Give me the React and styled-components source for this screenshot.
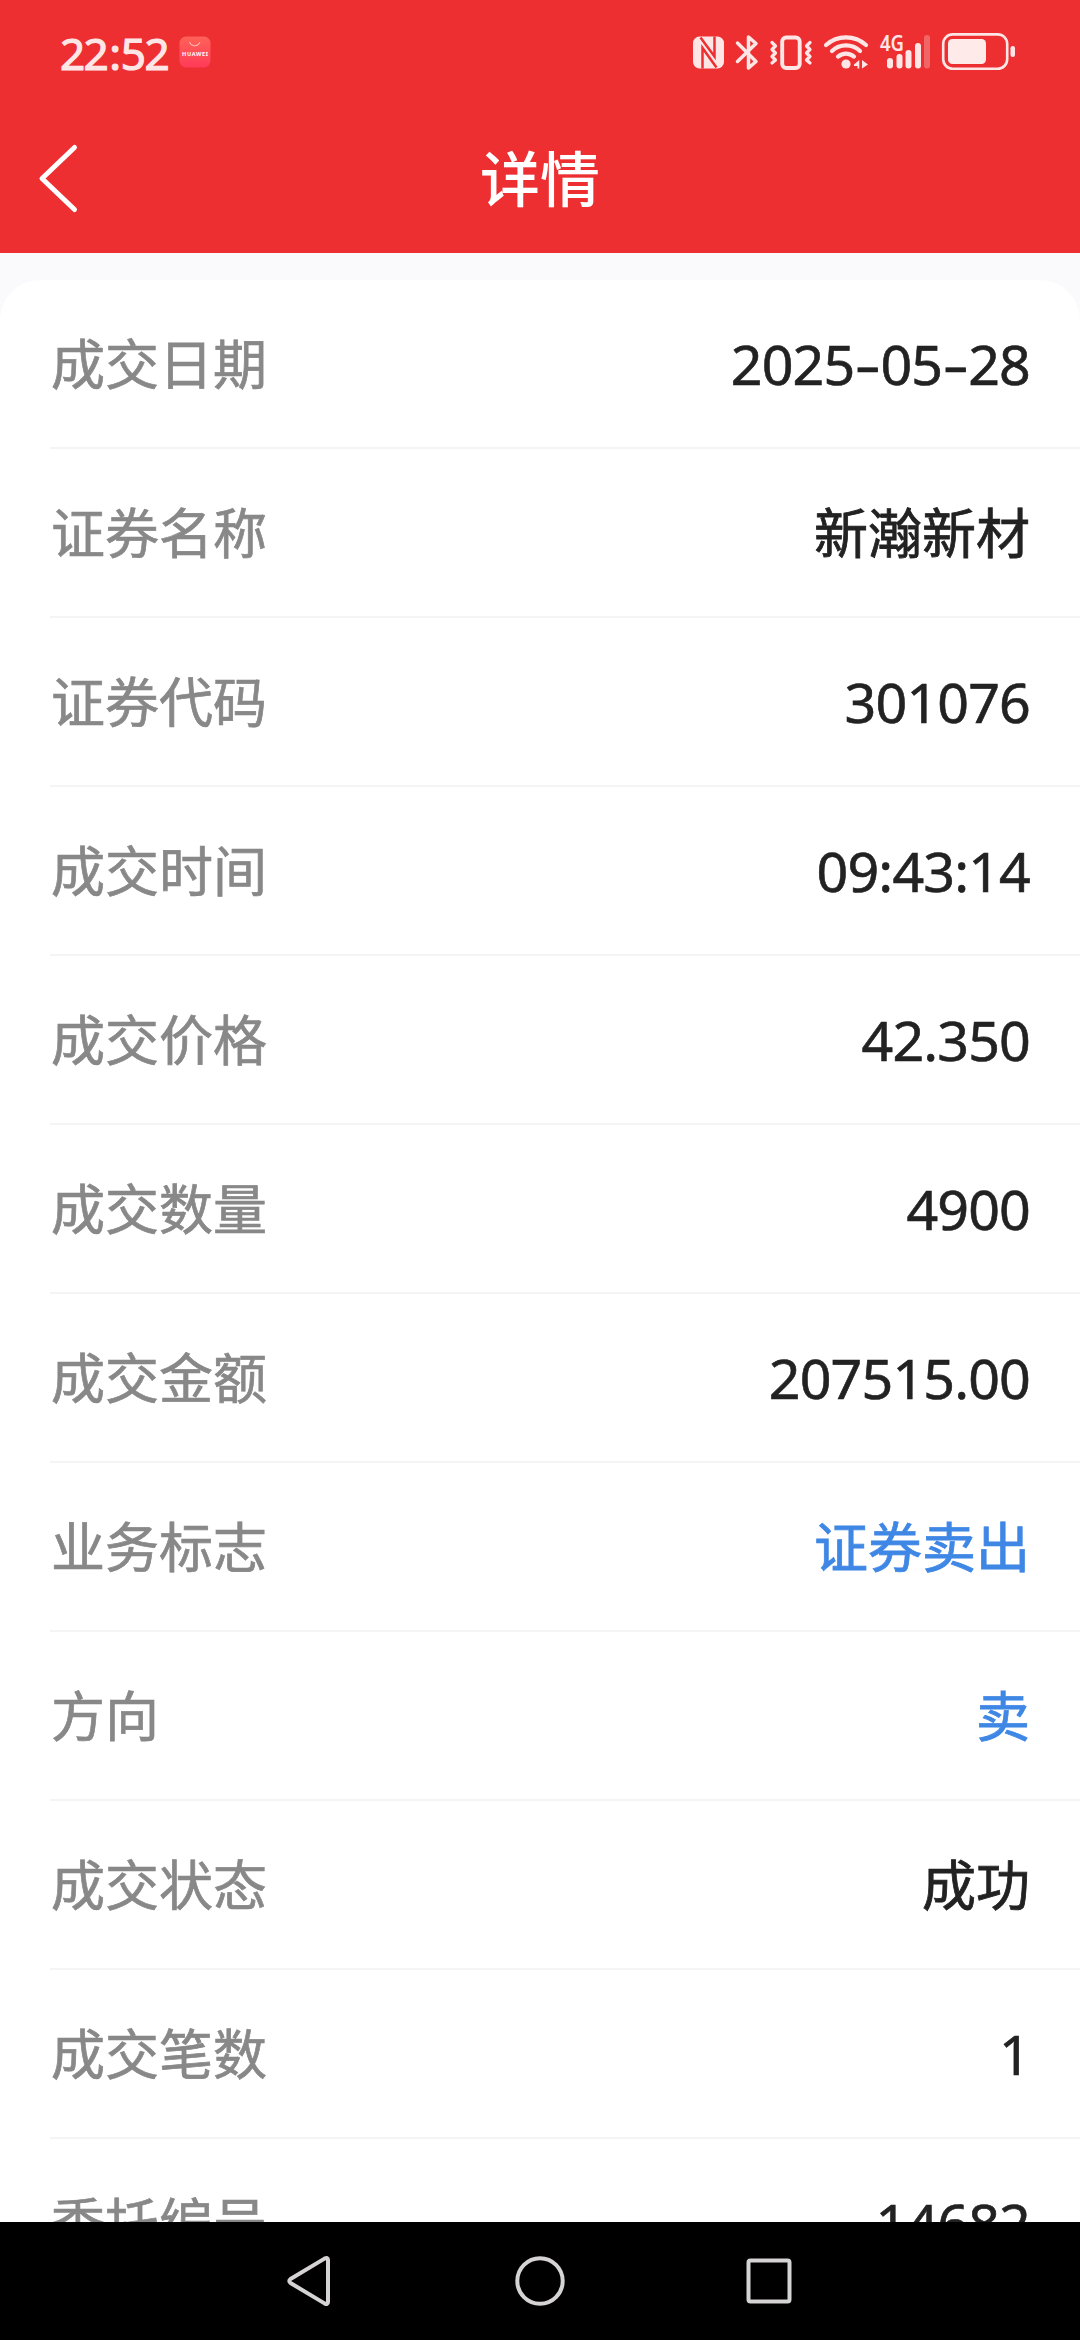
import React from "react";
import styled, { createGlobalStyle } from "styled-components";

const GlobalStyle = createGlobalStyle`
  * { box-sizing: border-box; }
  html, body { margin: 0; padding: 0; background: #000; }
  body { font-family: "Noto Sans", "Noto Sans CJK SC", sans-serif; }
`;

const Screen = styled.div`
  width: 1080px;
  height: 2340px;
  overflow: hidden;
  display: flex;
  flex-direction: column;
  background: #fafafc;
`;

const Header = styled.header`
  flex: none;
  height: 253px;
  background: #ed2f32;
  display: flex;
  flex-direction: column;
`;

const StatusBar = styled.div`
  height: 104px;
  padding: 0 60px;
  display: flex;
  align-items: center;
`;

const Clock = styled.span`
  width: 119px;
  font-size: 44px;
  line-height: 54px;
  font-weight: 400;
  letter-spacing: -1.6px;
  padding-top: 1px;
  color: #ffe6e6;
  -webkit-text-stroke: 1.2px #ffe6e6;
`;

const Colon = styled.span`
  padding: 0 1.5px 0 2px;
`;

const StatusIcons = styled.div`
  margin-left: auto;
  display: flex;
`;

const Icon = styled.svg`
  display: block;
  flex: none;
  overflow: visible;
`;

const TitleBar = styled.div`
  height: 149px;
  padding: 0 36px;
  display: grid;
  grid-template-columns: 120px 1fr 120px;
  align-items: center;
`;

const BackButton = styled.button`
  border: 0;
  padding: 0;
  background: none;
  justify-self: start;
  display: flex;
`;

const Title = styled.h1`
  margin: 0;
  padding-bottom: 5px;
  text-align: center;
  font-family: "Noto Sans CJK SC", sans-serif;
  font-size: 60px;
  line-height: 72px;
  font-weight: 500;
  color: #fff;
`;

const Content = styled.main`
  flex: 1;
  min-height: 0;
  overflow: hidden;
  padding-top: 27px;
`;

const Card = styled.section`
  background: #fff;
  border-radius: 40px 40px 0 0;
  padding-left: 50px;
`;

const Row = styled.div`
  height: 169px;
  padding: 0 50px 0 1px;
  border-bottom: 2px solid #f4f4f4;
  display: flex;
  align-items: center;
  justify-content: space-between;
  font-family: "Noto Sans CJK SC", sans-serif;
  font-size: 54px;
  line-height: 80px;
  font-weight: 400;
`;

const Label = styled.span`
  padding-bottom: 4px;
  color: #888;
  -webkit-text-stroke: 0.7px #888;
`;

const Value = styled.span`
  padding-bottom: 4px;
  color: ${(p) => (p.$accent ? "#3f87e5" : "#222")};
  -webkit-text-stroke: 0.8px ${(p) => (p.$accent ? "#3f87e5" : "#222")};
`;

const NumberValue = styled.span`
  color: #222;
  font-family: "Noto Sans", sans-serif;
  font-size: 55.5px;
  letter-spacing: -0.85px;
  -webkit-text-stroke: 0.6px #222;
`;

const Dash = styled.span`
  display: inline-block;
  width: 26px;
  text-align: center;
  transform: translateY(-0.5px) scaleX(1.45);
`;

const NavBar = styled.nav`
  flex: none;
  height: 118px;
  background: #000;
  display: flex;
  align-items: center;
  justify-content: center;
  gap: 173px;
`;

const INK = "#ffe6e6";

function AppBadge() {
  return (
    <Icon width="32" height="32" viewBox="0 0 32 32">
      <defs>
        <linearGradient id="badge" x1="0" y1="0" x2="0" y2="1">
          <stop offset="0" stopColor="#ff6258" />
          <stop offset="1" stopColor="#ff3a58" />
        </linearGradient>
      </defs>
      <rect x="0.5" y="0.5" width="31" height="31" rx="6.5" fill="url(#badge)" />
      <path d="M10.5 6 A5.4 5 0 0 0 21 6" fill="none" stroke="#ffc9c4" strokeWidth="1" />
      <text x="3" y="20.3" fontSize="5.6" fontWeight="700" fill="#fff" textLength="26">HUAWEI</text>
    </Icon>
  );
}

function Nfc() {
  return (
    <Icon width="38" height="40" viewBox="691 32 38 40">
      <rect x="693" y="36.5" width="31" height="32" rx="6.5" fill={INK} />
      <g fill="none" stroke="#ed2f32" strokeWidth="2.5">
        <path d="M700.5 37.5 L714.5 56.5 V36.5" />
        <path d="M702.5 68.5 V48 L716.5 67.5" />
      </g>
    </Icon>
  );
}

function Bluetooth() {
  return (
    <Icon width="36" height="40" viewBox="729 32 36 40">
      <path
        d="M737.5 43 L756 61.5 L748.5 68 V37 L756 43.5 L737.5 61.5"
        fill="none" stroke={INK} strokeWidth="3.5" strokeLinecap="round" strokeLinejoin="round"
      />
    </Icon>
  );
}

function Vibrate() {
  return (
    <Icon width="53" height="40" viewBox="765 32 53 40">
      <g fill="none" stroke={INK} strokeLinecap="round" strokeLinejoin="round">
        <rect x="782.2" y="37.5" width="17.5" height="30.5" rx="4" strokeWidth="3.9" />
        <path d="M772 42.5 L775.5 46 L772 49.5 L775.5 53 L772 56.5 L775.5 60 L772 63" strokeWidth="3.2" />
        <path d="M810 42.5 L806.5 46 L810 49.5 L806.5 53 L810 56.5 L806.5 60 L810 63" strokeWidth="3.2" />
      </g>
    </Icon>
  );
}

function Wifi() {
  return (
    <Icon width="58" height="40" viewBox="818 32 58 40">
      <g fill="none" stroke={INK} strokeWidth="4.2" strokeLinecap="round">
        <path d="M826 45 A30 30 0 0 1 866 45" />
        <path d="M832 51 A20.5 20.5 0 0 1 860 51" />
        <path d="M838 56.6 A12 12 0 0 1 854 56.6" />
      </g>
      <circle cx="846" cy="64" r="4.6" fill={INK} />
      <path d="M854 64.5 L859.3 60 V68.5 H857.5 V66 H854 Z M862 60 L868 64.5 L862 68.5 Z" fill={INK} />
    </Icon>
  );
}

function Signal() {
  return (
    <Icon width="60" height="40" viewBox="876 32 60 40">
      <text x="880" y="51.3" fontSize="22" fontWeight="600" fill={INK} textLength="24" lengthAdjust="spacingAndGlyphs">4G</text>
      <g fill={INK}>
        <rect x="887" y="58" width="6" height="10.5" rx="3" />
        <rect x="896.5" y="54" width="6" height="14.5" rx="3" />
        <rect x="905.5" y="50" width="6" height="18.5" rx="3" />
        <rect x="915" y="43" width="6" height="25.5" rx="3" />
        <rect x="924" y="35" width="6" height="33.5" rx="3" opacity="0.3" />
      </g>
    </Icon>
  );
}

function Battery() {
  return (
    <Icon width="84" height="40" viewBox="936 32 84 40">
      <rect x="943.2" y="34.4" width="64" height="34.4" rx="9.5" fill="none" stroke={INK} strokeWidth="2.6" />
      <rect x="948" y="39" width="38" height="25" rx="4.5" fill="#ffeaea" />
      <rect x="1010.5" y="46" width="4.5" height="11" rx="2.2" fill={INK} />
    </Icon>
  );
}

const rows = [
  { label: "成交日期", number: "2025-05-28" },
  { label: "证券名称", value: "新瀚新材" },
  { label: "证券代码", number: "301076" },
  { label: "成交时间", number: "09:43:14" },
  { label: "成交价格", number: "42.350" },
  { label: "成交数量", number: "4900" },
  { label: "成交金额", number: "207515.00" },
  { label: "业务标志", value: "证券卖出", accent: true },
  { label: "方向", value: "卖", accent: true },
  { label: "成交状态", value: "成功" },
  { label: "成交笔数", number: "1" },
  { label: "委托编号", number: "14682" },
];

function NumberText({ text }) {
  return (
    <NumberValue>
      {text.split("-").map((part, i) => (
        <React.Fragment key={i}>
          {i > 0 && <Dash>-</Dash>}
          {part}
        </React.Fragment>
      ))}
    </NumberValue>
  );
}

export default function App() {
  return (
    <Screen lang="zh-CN">
      <GlobalStyle />
      <Header>
        <StatusBar>
          <Clock>22<Colon>:</Colon>52</Clock>
          <AppBadge />
          <StatusIcons>
            <Nfc />
            <Bluetooth />
            <Vibrate />
            <Wifi />
            <Signal />
            <Battery />
          </StatusIcons>
        </StatusBar>
        <TitleBar>
          <BackButton aria-label="返回">
            <Icon width="44" height="70" viewBox="36 144 44 70">
              <path d="M74.5 147.5 L42 178.5 L74.5 209.5" fill="none" stroke="#fff" strokeWidth="5" strokeLinecap="round" strokeLinejoin="round" />
            </Icon>
          </BackButton>
          <Title>详情</Title>
        </TitleBar>
      </Header>
      <Content>
        <Card>
          {rows.map((r) => (
            <Row key={r.label}>
              <Label>{r.label}</Label>
              {r.number ? <NumberText text={r.number} /> : <Value $accent={r.accent}>{r.value}</Value>}
            </Row>
          ))}
        </Card>
      </Content>
      <NavBar>
        <Icon width="56" height="56" viewBox="283 2253 56 56">
          <path d="M324.5 2258.6 Q328 2256.8 328 2260 V2302 Q328 2305.2 324.5 2303.4 L290.5 2283 Q288 2281 290.5 2279 Z" fill="none" stroke="#d5d3d3" strokeWidth="4" strokeLinejoin="round" />
        </Icon>
        <Icon width="56" height="56" viewBox="512 2253 56 56">
          <circle cx="540" cy="2281" r="22.7" fill="none" stroke="#d5d3d3" strokeWidth="4" />
        </Icon>
        <Icon width="56" height="56" viewBox="741 2253 56 56">
          <rect x="748.5" y="2260.5" width="41" height="41" rx="2" fill="none" stroke="#d5d3d3" strokeWidth="4" />
        </Icon>
      </NavBar>
    </Screen>
  );
}
